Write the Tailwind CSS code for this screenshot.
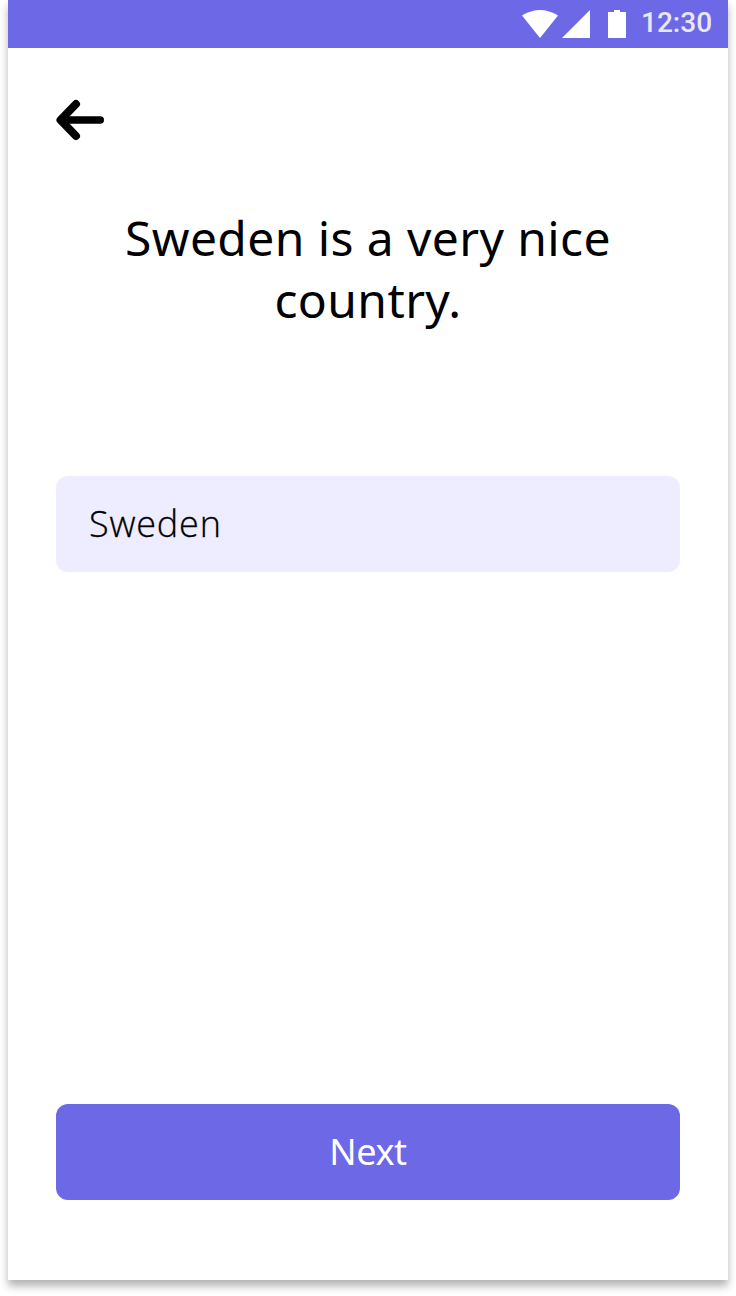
<!DOCTYPE html>
<html lang="en">
<head>
<meta charset="utf-8">
<meta name="viewport" content="width=device-width, initial-scale=1">
<title>Country</title>
<script src="https://cdn.jsdelivr.net/npm/@tailwindcss/browser@4"></script>
</head>
<body class="bg-white h-[1296px] overflow-hidden px-2 font-['Noto_Sans',sans-serif] text-black">
<div class="flex flex-col h-[1280px] bg-white shadow-[0_6px_8px_rgba(0,0,0,0.3)]">
  <header class="h-12 shrink-0 bg-[#6c68e6] flex items-center justify-end pr-4 text-white">
    <svg class="w-[72px] h-12" viewBox="0 0 72 48" fill="currentColor"><path d="M2 15.5Q20 4.500 38 15.500L20 38ZM70 10V38H42Z"/></svg>
    <svg class="w-[18px] h-12 ml-4" viewBox="0 0 18 48" fill="currentColor"><path d="M0 12H6V10H12V12H18V38H0Z"/></svg>
    <span class="ml-[15px] w-[71px] whitespace-nowrap font-['Roboto',sans-serif] font-medium text-[28px] leading-[46px] h-12 text-white/85">12:30</span>
  </header>
  <main class="flex flex-col flex-1 px-12">
    <button class="mt-12 w-12 h-12" aria-label="Back">
      <svg class="block w-12 h-12" viewBox="0 0 48 48" fill="none" stroke="black" stroke-width="8" stroke-linecap="round" stroke-linejoin="round"><path d="M20 8L4.500 24L20 40"/><path stroke-width="7.500" d="M6 24H44.250"/><path stroke="none" fill="black" d="M4 24L13 15V33Z"/></svg>
    </button>
    <h1 class="mt-[63px] text-center text-[48px] leading-[62px] font-normal tracking-[0.4px]">Sweden is a very nice<br>country.</h1>
    <div class="mt-[145px] h-24 rounded-xl bg-[#eeecff] px-[33px] flex items-center font-['Open_Sans',sans-serif] font-light text-[36px] tracking-[0.8px] [-webkit-text-stroke:0.3px_black]"><span>Sweden</span></div>
    <button class="mt-auto mb-20 h-24 rounded-xl bg-[#6c68e6] text-white text-[36px] tracking-[-0.4px]">Next</button>
  </main>
</div>
</body>
</html>
